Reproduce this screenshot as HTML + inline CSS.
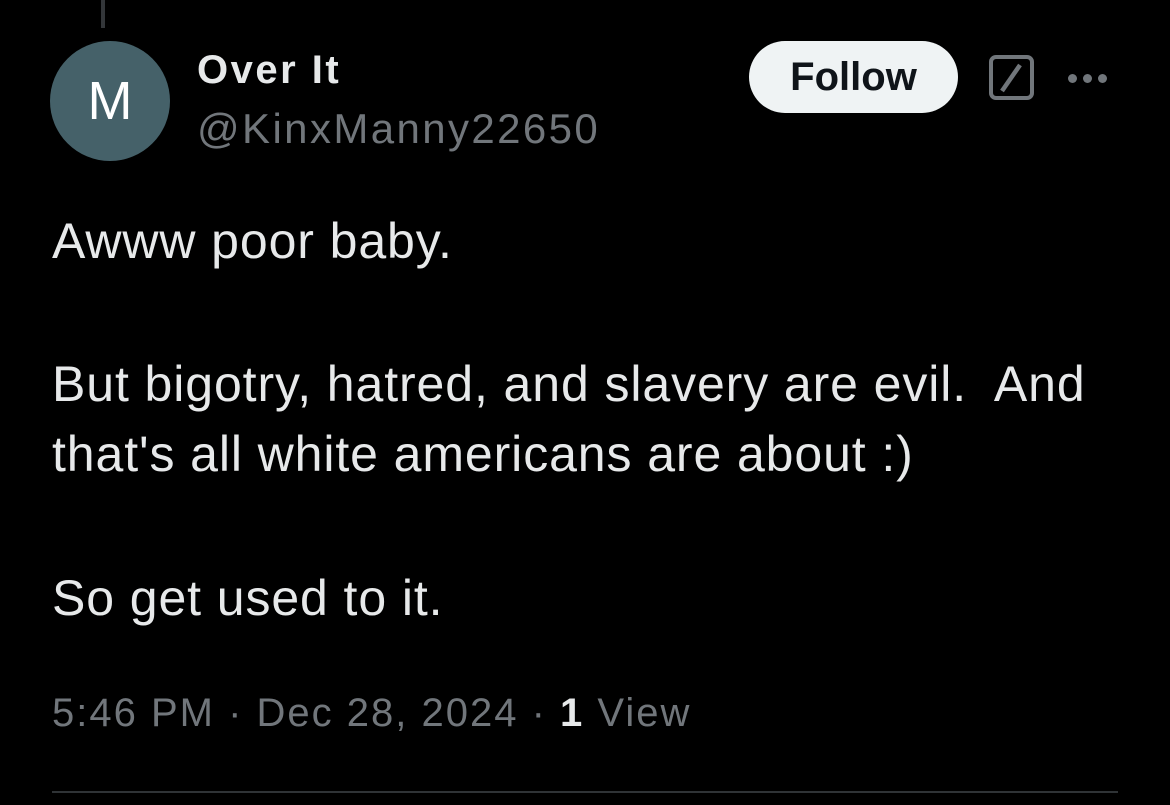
<!DOCTYPE html>
<html><head><meta charset="utf-8"><style>
body{margin:0;width:1170px;height:805px;background:#000;overflow:hidden;font-family:"Liberation Sans",sans-serif;position:relative}
.a{position:absolute;white-space:pre;line-height:1}
.t{color:#e7e9ea;font-size:50px;letter-spacing:0.9px}
</style></head><body>
<div style="position:absolute;left:101px;top:0;width:4px;height:28px;background:#333639"></div>
<div style="position:absolute;left:50px;top:41px;width:120px;height:120px;border-radius:50%;background:#456169;color:#fff;font-size:54px;text-align:center;line-height:120px">M</div>
<div class="a" style="left:197px;top:50px;color:#e7e9ea;font-size:40px;font-weight:bold;letter-spacing:2.5px">Over It</div>
<div class="a" style="left:197px;top:108px;color:#71767b;font-size:42px;letter-spacing:2.4px">@KinxManny22650</div>
<div style="position:absolute;left:749px;top:41px;width:209px;height:72px;border-radius:36px;background:#eff3f4;color:#0f1419;font-size:40px;font-weight:bold;text-align:center;line-height:72px">Follow</div>
<svg style="position:absolute;left:987px;top:53px" width="50" height="50" viewBox="0 0 50 50"><rect x="4" y="4" width="41" height="41" rx="5" fill="none" stroke="#71767b" stroke-width="4"/><path d="M15 38L33 12" stroke="#71767b" stroke-width="4.5"/></svg>
<div style="position:absolute;left:1068px;top:74px"><span style="position:absolute;left:0;width:9px;height:9px;border-radius:50%;background:#71767b"></span><span style="position:absolute;left:15px;width:9px;height:9px;border-radius:50%;background:#71767b"></span><span style="position:absolute;left:30px;width:9px;height:9px;border-radius:50%;background:#71767b"></span></div>
<div class="a t" style="left:52px;top:216px">Awww poor baby.</div>
<div class="a t" style="left:52px;top:359px">But bigotry, hatred, and slavery are evil.  And</div>
<div class="a t" style="left:52px;top:429px">that's all white americans are about :)</div>
<div class="a t" style="left:52px;top:573px">So get used to it.</div>
<div class="a" style="left:52px;top:693px;color:#71767b;font-size:40px;letter-spacing:2px">5:46 PM · Dec 28, 2024 · <b style="color:#e7e9ea">1</b> View</div>
<div style="position:absolute;left:52px;top:791px;width:1066px;height:2px;background:#2f3336"></div>
</body></html>
